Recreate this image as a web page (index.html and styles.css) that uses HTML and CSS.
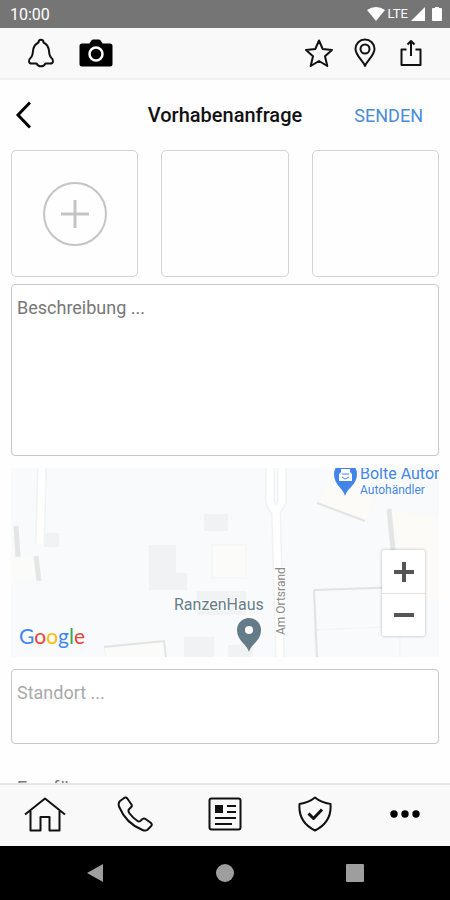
FILE: index.html
```html
<!DOCTYPE html>
<html lang="de">
<head>
    <meta charset="UTF-8">
    <meta name="viewport" content="width=device-width, initial-scale=1.0">
    <title>Vorhabenanfrage</title>
    <link rel="stylesheet" href="styles.css">
</head>
<body>
    <div class="status-bar">
        <span class="clock">10:00</span>
        <div class="status-icons">
            <svg width="18" height="14" viewBox="0 0 18 14"><path d="M0 3Q9-3 18 3L9 14Z" fill="#fff"/></svg>
            <span class="network">LTE</span>
            <svg width="14" height="14" viewBox="0 0 14 14"><path d="M14 0V14H0Z" fill="#fff"/></svg>
            <svg class="battery" width="10" height="14" viewBox="0 0 10 14"><path d="M3 0H7V1H9Q10 1 10 2V13Q10 14 9 14H1Q0 14 0 13V2Q0 1 1 1H3Z" fill="#fff"/></svg>
        </div>
    </div>

    <div class="toolbar">
        <div class="toolbar-group toolbar-left">
            <button class="icon-button" type="button" aria-label="Benachrichtigungen">
                <svg width="28" height="30" viewBox="0 0 28 30" class="line-icon"><path d="M11.500 4.500C11.500 .8 16.500 .8 16.500 4.500C20 6 21.500 9 22 13C22.300 17 22.700 18.500 24.500 20C27 22 26.300 25.500 23.500 25.500H18.500C16.500 29.300 11.500 29.300 9.500 25.500H4.500C1.700 25.500 1 22 3.500 20C5.300 18.500 5.700 17 6 13C6.500 9 8 6 11.500 4.500Z"/></svg>
            </button>
            <button class="icon-button" type="button" aria-label="Kamera">
                <svg width="34" height="28" viewBox="0 0 34 28"><path d="M3 4.500H10.500L12 2Q12.700 .5 14 .5H20Q21.300 .5 22 2L23.500 4.500H31Q33.500 4.500 33.500 7V25Q33.500 27.500 31 27.500H3Q.5 27.500 .5 25V7Q.5 4.500 3 4.500Z"/><circle cx="17" cy="15" r="6.500" fill="none" stroke="#fff" stroke-width="2.500"/></svg>
            </button>
        </div>
        <div class="toolbar-group toolbar-right">
            <button class="icon-button" type="button" aria-label="Favoriten">
                <svg width="28" height="30" viewBox="0 0 28 30" class="line-icon"><path d="M14 2.500L17.700 11L27 12L20 18.200L22.300 28L14 23L5.700 28L8 18.200L1 12L10.300 11Z"/></svg>
            </button>
            <button class="icon-button" type="button" aria-label="Standorte">
                <svg width="28" height="30" viewBox="0 0 28 30" class="line-icon"><path d="M14 28C12 22.500 4.500 17.500 4.500 11A9.500 9.500 0 0 1 23.500 11C23.500 17.500 16 22.500 14 28Z"/><circle cx="14" cy="11" r="4.500"/></svg>
            </button>
            <button class="icon-button" type="button" aria-label="Teilen">
                <svg width="28" height="30" viewBox="0 0 28 30" class="line-icon"><path d="M9.500 11.500H4.500V27H23.500V11.500H18.500M14 18V3M10.500 6.500L14 3L17.500 6.500"/></svg>
            </button>
        </div>
    </div>

    <form class="request">
        <header class="request-header">
            <button class="back" type="button" aria-label="Zurück">
                <svg width="16" height="28" viewBox="0 0 16 28"><path d="M15 1.500L3 14L15 26.500" fill="none" stroke="#000" stroke-width="3"/></svg>
            </button>
            <h1>Vorhabenanfrage</h1>
            <button class="send" type="button">SENDEN</button>
        </header>

        <div class="photos">
            <button class="photo" type="button" aria-label="Foto hinzufügen">
                <svg width="64" height="64" viewBox="0 0 64 64" fill="none" stroke="#c4c4c4"><circle cx="32" cy="32" r="31" stroke-width="2"/><path d="M32 18V46M18 32H46" stroke-width="3"/></svg>
            </button>
            <button class="photo" type="button" aria-label="Foto 2"></button>
            <button class="photo" type="button" aria-label="Foto 3"></button>
        </div>

        <textarea class="field description" aria-label="Beschreibung" placeholder="Beschreibung ..."></textarea>

        <div class="map">
            <svg class="map-canvas" viewBox="0 0 428 189" preserveAspectRatio="xMidYMid slice">
                <rect width="428" height="189" fill="#f8fafb"/>
                <!-- roads -->
                <g fill="none" stroke="#f1f2f3" stroke-width="10">
                    <path d="M31 0L29 76"/>
                    <path d="M259 0V30Q259 38 265 44L269 189M271 0V34L265 44"/>
                </g>
                <g fill="none" stroke="#fff" stroke-width="7">
                    <path d="M31 0L29 76"/>
                    <path d="M259 0V30Q259 38 265 44L269 189M271 0V34L265 44"/>
                </g>
                <!-- buildings -->
                <g fill="#f1f2f3">
                    <path d="M33 65H48V79H33Z"/>
                    <path d="M138 77H165V105H176V122H138Z"/>
                    <path d="M193 46H217V63H193Z"/>
                    <path d="M186 123H235V147H186Z"/>
                    <path d="M173 169H203V189H173Z"/>
                    <path d="M217 177H242V189H217Z"/>
                </g>
                <g fill="#fbfbfa" stroke="#f3f3f2">
                    <path d="M201 77H235V110H201Z"/>
                    <path d="M0 88H24L27 111L0 114Z" stroke="none"/>
                    <path d="M307 36L322 0H372L355 52Z" fill="#fcfbf8" stroke="none"/>
                    <path d="M380 42L428 50V132H398Z" fill="#fcfbf7" stroke="none"/>
                    <path d="M95 189L93 178L153 173L155 189"/>
                    <path d="M304 189L303 122L395 118V158L304 162M389 158V189" fill="none"/>
                </g>
                <g fill="none" stroke="#e4e5e5" stroke-width="5">
                    <path d="M5 58L7 89M25 88L28 113"/>
                    <path d="M378 41L382 82"/>
                </g>
                <path d="M306 35L354 53M303 122L306 189M303 122L395 119M93 179L153 173L155 189" fill="none" stroke="#e2e3e3" stroke-width="2"/>
                <!-- places -->
                <path d="M334 28C332 20 323 17 323 6A11 11 0 0 1 346 6C346 17 336 20 334 28Z" fill="#4285e8"/>
                <path d="M328 13V6L330 4V1H339V4L341 6V13Z" fill="#fff"/>
                <path d="M331 6H338M331 9L334 11L338 9" fill="none" stroke="#4285e8"/>
                <path d="M238 184C236 176 226 173 226 162A12 12 0 0 1 250 162C250 173 240 176 238 184Z" fill="#647c87"/>
                <circle cx="238" cy="162" r="4" fill="#fff"/>
                <g class="map-label">
                    <text class="place" x="163" y="142">RanzenHaus</text>
                    <text class="shop" x="349" y="11">Bolte Autom</text>
                    <text class="shop-type" x="349" y="26">Autohändler</text>
                    <text class="street" transform="translate(274 167) rotate(-90)">Am Ortsrand</text>
                </g>
                <text class="map-logo" x="8" y="176"><tspan fill="#4285f4">G</tspan><tspan fill="#ea4335">o</tspan><tspan fill="#fbbc05">o</tspan><tspan fill="#4285f4">g</tspan><tspan fill="#34a853">l</tspan><tspan fill="#ea4335">e</tspan></text>
            </svg>
            <div class="zoom-control">
                <button type="button" aria-label="Vergrößern"><svg width="20" height="20" viewBox="0 0 20 20"><path d="M10 0V20M0 10H20" stroke="#555" stroke-width="4"/></svg></button>
                <button type="button" aria-label="Verkleinern"><svg width="20" height="20" viewBox="0 0 20 20"><path d="M0 10H20" stroke="#555" stroke-width="4"/></svg></button>
            </div>
        </div>

        <textarea class="field location" aria-label="Standort" placeholder="Standort ..."></textarea>

        <p class="recipient">Empfänger</p>
    </form>

    <nav class="tabs">
        <a href="#start" aria-label="Start">
            <svg width="42" height="36" viewBox="0 0 42 36" class="line-icon"><path d="M1 18.500L21 2.500L41 18.500M6.500 15V34.500H16.500V21H25.500V34.500H35.500V15"/></svg>
        </a>
        <a href="#telefon" aria-label="Telefon">
            <svg width="36" height="36" viewBox="0 0 36 36" class="line-icon"><path d="M3 5L7.500 1.700Q9 1 10.300 2.500L14.500 8.500Q15.300 10 14 11.300L11.800 13.500Q11 15 12.200 17Q16 22 20.500 25Q22 26 23.300 25L25.500 23Q27 22 28.500 23L34 27Q35.500 28.500 34.200 30L30.500 33.800Q28.500 35.300 25.500 34Q9 27.500 2 10.500Q1 7 3 5Z"/></svg>
        </a>
        <a href="#news" aria-label="Neuigkeiten">
            <svg width="34" height="34" viewBox="0 0 34 34" class="line-icon"><rect x="1.500" y="1.500" width="31" height="31" rx="2"/><path d="M7 8H15V16H7Z" fill="#111" stroke="none"/><path d="M19 9H28M19 15H28M7 21H28M7 27H24"/></svg>
        </a>
        <a href="#schutz" aria-label="Sicherheit">
            <svg width="34" height="36" viewBox="0 0 34 36" class="line-icon"><path d="M17 1.500Q23 6.500 32.500 8Q34 26 17 34.500Q0 26 1.500 8Q11 6.500 17 1.500Z"/><path d="M10.500 17.500L15.500 22.500L24 13.500" stroke-width="3"/></svg>
        </a>
        <a href="#mehr" aria-label="Mehr">
            <svg width="30" height="8" viewBox="0 0 30 8"><circle cx="4" cy="4" r="3.700"/><circle cx="15" cy="4" r="3.700"/><circle cx="26" cy="4" r="3.700"/></svg>
        </a>
    </nav>

    <div class="system-bar">
        <button type="button" aria-label="Zurück"><svg width="18" height="20" viewBox="0 0 18 20"><path d="M17 1V19L1 10Z"/></svg></button>
        <button type="button" aria-label="Startbildschirm"><svg width="18" height="18" viewBox="0 0 18 18"><circle cx="9" cy="9" r="9"/></svg></button>
        <button type="button" aria-label="Übersicht"><svg width="18" height="18" viewBox="0 0 18 18"><rect width="18" height="18" rx="1"/></svg></button>
    </div>
</body>
</html>
```

FILE: styles.css
```css
* {
    box-sizing: border-box;
}
body {
    margin: 0;
    height: 100vh;
    display: flex;
    flex-direction: column;
    font-family: Roboto, sans-serif;
    background-color: #fefefe;
    color: #111;
}
button {
    padding: 0;
    border: none;
    background: none;
    font-family: inherit;
    cursor: pointer;
}
svg {
    display: block;
}
.line-icon {
    fill: none;
    stroke: #111;
    stroke-width: 2;
    stroke-linejoin: round;
}
.status-bar {
    flex: none;
    height: 28px;
    padding: 0 8px 0 10px;
    display: flex;
    align-items: center;
    justify-content: space-between;
    background-color: #757575;
    color: #fff;
}
.clock {
    font-size: 16px;
}
.status-icons {
    display: flex;
    align-items: center;
    gap: 3px;
}
.network {
    font-size: 13px;
    line-height: 14px;
}
.battery {
    margin-left: 4px;
}
.toolbar {
    flex: none;
    height: 52px;
    padding: 0 25px 0 27px;
    display: flex;
    align-items: center;
    justify-content: space-between;
    background-color: #f9f9f9;
    border-bottom: 2px solid #f1f1f1;
}
.toolbar-group {
    display: flex;
    align-items: center;
}
.toolbar-left {
    gap: 24px;
}
.toolbar-right {
    gap: 18px;
}
.request {
    flex: 1;
    min-height: 0;
    overflow: hidden;
    padding: 0 11px;
}
.request-header {
    height: 70px;
    padding: 0 4px;
    display: grid;
    grid-template-columns: 1fr auto 1fr;
    align-items: center;
}
.back {
    justify-self: start;
}
.request-header h1 {
    margin: 0;
    font-size: 20px;
    font-weight: 500;
}
.send {
    justify-self: end;
    margin-right: 12px;
    font-size: 18px;
    color: #4a8cd6;
}
.photos {
    display: grid;
    grid-template-columns: repeat(3, 1fr);
    gap: 23px;
    margin-bottom: 7px;
}
.photo {
    aspect-ratio: 1;
    display: flex;
    align-items: center;
    justify-content: center;
    border: 1px solid #d2d2d2;
    border-radius: 5px;
}
.field {
    display: block;
    width: 100%;
    padding: 11px 5px;
    border: 1px solid #c8c8c8;
    border-radius: 4px;
    background-color: #fff;
    font-family: inherit;
    font-size: 18px;
    line-height: 24px;
    resize: none;
}
.description {
    height: 172px;
}
.description::placeholder {
    color: #777;
}
.location {
    height: 75px;
}
.location::placeholder {
    color: #a9a9a9;
}
.map {
    position: relative;
    height: 189px;
    margin: 12px 0;
}
.map-canvas {
    width: 100%;
    height: 100%;
}
.map-label {
    stroke: #fff;
    stroke-width: 2px;
    paint-order: stroke;
}
.place {
    font-size: 16px;
    fill: #647c87;
}
.shop {
    font-size: 16px;
    fill: #4285e8;
}
.shop-type {
    font-size: 12px;
    fill: #4285e8;
}
.street {
    font-size: 12px;
    fill: #888;
}
.map-logo {
    font-family: Lato, sans-serif;
    font-size: 21px;
    font-weight: 400;
}
.map-logo tspan {
    stroke: none;
}
.zoom-control {
    position: absolute;
    right: 14px;
    bottom: 21px;
    width: 43px;
    background-color: #fff;
    border-radius: 2px;
    box-shadow: 0 0 3px rgba(0, 0, 0, 0.3);
}
.zoom-control button {
    width: 100%;
    height: 43px;
    display: flex;
    align-items: center;
    justify-content: center;
}
.zoom-control button + button {
    border-top: 1px solid #e2e2e2;
}
.recipient {
    margin: 32px 6px 0;
    font-size: 18px;
    line-height: 24px;
    color: #777;
}
.tabs {
    flex: none;
    height: 63px;
    padding-bottom: 3px;
    display: grid;
    grid-template-columns: repeat(5, 1fr);
    align-items: center;
    justify-items: center;
    background-color: #f9f9f9;
    border-top: 2px solid #e6e6e6;
}
.system-bar {
    flex: none;
    height: 54px;
    padding: 0 30px;
    display: grid;
    grid-template-columns: repeat(3, 1fr);
    align-items: center;
    justify-items: center;
    background-color: #000;
}
.system-bar svg {
    fill: #9e9e9e;
}
```
